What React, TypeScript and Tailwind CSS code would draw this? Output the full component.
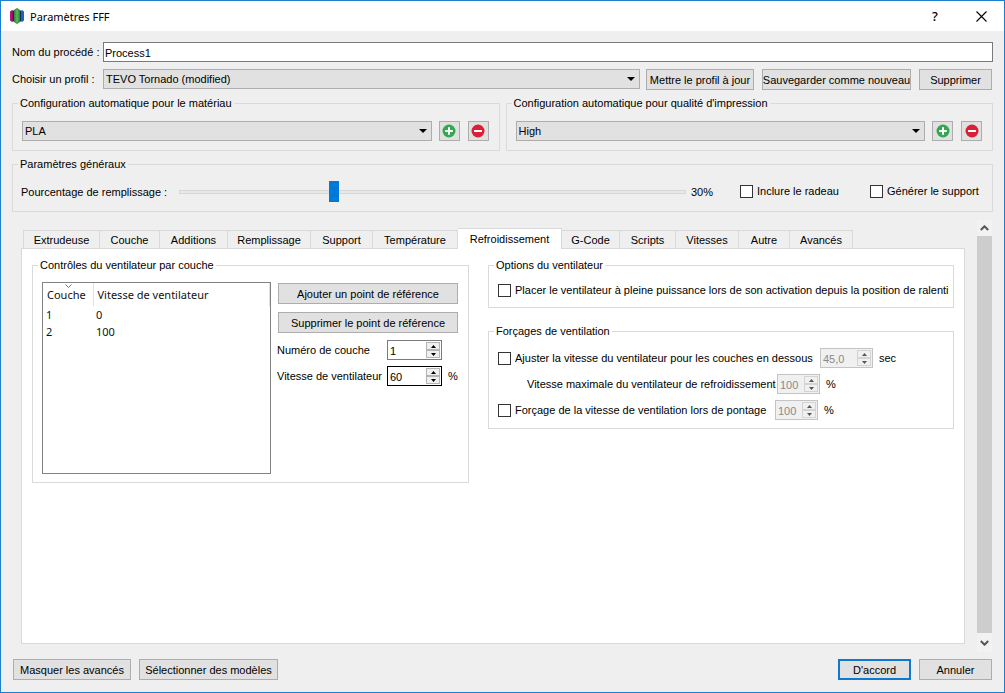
import { useState } from "react";
import type { ReactNode } from "react";

const TABS = [
  { label: "Extrudeuse", width: "w-[77px]" },
  { label: "Couche", width: "w-[60px]" },
  { label: "Additions", width: "w-[68px]" },
  { label: "Remplissage", width: "w-[83px]" },
  { label: "Support", width: "w-[62px]" },
  { label: "Température", width: "w-[85px]" },
  { label: "Refroidissement", width: "w-[104px]" },
  { label: "G-Code", width: "w-[58px]" },
  { label: "Scripts", width: "w-[56px]" },
  { label: "Vitesses", width: "w-[63px]" },
  { label: "Autre", width: "w-[51px]" },
  { label: "Avancés", width: "w-[63px]" },
];

const FAN_POINTS = [
  { layer: 1, speed: 0 },
  { layer: 2, speed: 100 },
];

export default function App() {
  const [activeTab, setActiveTab] = useState("Refroidissement");
  const [infill, setInfill] = useState(30);

  return (
    <div className="flex min-h-screen flex-col border border-[#1a7fce] bg-[#efefef] font-['Liberation_Sans',sans-serif] text-[11px] leading-[15px] text-black">
      <TitleBar />

      <main className="flex flex-1 flex-col px-[11px] pt-[11px] pb-3">
        <div className="flex items-center">
          <label htmlFor="process-name" className="w-[91px] shrink-0 pt-px">
            Nom du procédé :
          </label>
          <input
            id="process-name"
            type="text"
            defaultValue="Process1"
            className="h-5 min-w-0 flex-1 border border-[#7a7a7a] bg-white px-[1px] pt-[1px] outline-none"
          />
        </div>

        <div className="mt-[7px] flex items-start pr-px">
          <label htmlFor="profile" className="w-[91px] shrink-0 pt-[3px]">
            Choisir un profil :
          </label>
          <Select id="profile" value="TEVO Tornado (modified)" />
          <div className="ml-[6px] flex gap-2">
            <Button className="w-[108px]">Mettre le profil à jour</Button>
            <Button className="w-[149px]">Sauvegarder comme nouveau</Button>
            <Button className="w-[73px]">Supprimer</Button>
          </div>
        </div>

        <div className="mt-[6px] flex gap-[6px]">
          <AutoConfig id="material" title="Configuration automatique pour le matériau" value="PLA" />
          <AutoConfig id="quality" title="Configuration automatique pour qualité d'impression" value="High" />
        </div>

        <GroupBox title="Paramètres généraux" className="mt-[6px]">
          <div className="flex items-center pt-[9px] pb-px pl-[8px]">
            <label htmlFor="infill" className="w-[158px] shrink-0 pt-px">
              Pourcentage de remplissage :
            </label>
            <input
              id="infill"
              type="range"
              min={0}
              max={100}
              value={infill}
              onChange={(event) => setInfill(Number(event.target.value))}
              className="h-[21px] min-w-0 flex-1 appearance-none bg-transparent [&::-webkit-slider-runnable-track]:h-1 [&::-webkit-slider-runnable-track]:border [&::-webkit-slider-runnable-track]:border-[#d6d6d6] [&::-webkit-slider-runnable-track]:bg-[#e7eaea] [&::-webkit-slider-thumb]:mt-[-10px] [&::-webkit-slider-thumb]:h-[21px] [&::-webkit-slider-thumb]:w-[10px] [&::-webkit-slider-thumb]:appearance-none [&::-webkit-slider-thumb]:bg-[#007ad9]"
            />
            <output htmlFor="infill" className="w-[54px] pt-px pl-[5px]">
              {infill}%
            </output>
            <CheckBox id="raft" label="Inclure le radeau" className="w-[130px]" />
            <CheckBox id="support" label="Générer le support" className="w-[122px]" />
          </div>
        </GroupBox>

        <div className="mt-2 flex flex-1 gap-3">
          <div className="flex min-w-0 flex-1 flex-col pt-2 pb-2 pl-[9px]">
            <div role="tablist" className="z-10 -mb-px flex h-[21px] items-end pl-[2px]">
              {TABS.map((tab, index) => (
                <button
                  key={tab.label}
                  type="button"
                  role="tab"
                  aria-selected={tab.label === activeTab}
                  onClick={() => setActiveTab(tab.label)}
                  className={`${tab.width} shrink-0 border-t border-r border-[#d9d9d9] ${index === 0 ? "border-l" : ""} ${
                    tab.label === activeTab ? "h-[21px] bg-white" : "mb-px h-[18px] bg-[#efefef] pt-px"
                  }`}
                >
                  {tab.label}
                </button>
              ))}
            </div>
            <div
              role="tabpanel"
              className="flex flex-1 items-start gap-[19px] border border-[#d9d9d9] bg-white px-[10px] pt-[9px]"
            >
              <LayerFanControls />
              <div className="min-w-0 flex-1">
                <FanOptions />
                <FanOverrides />
              </div>
            </div>
          </div>
          <ScrollBar />
        </div>

        <footer className="mt-[7px] flex gap-2 px-[1px]">
          <Button className="w-[118px]">Masquer les avancés</Button>
          <Button className="w-[139px]">Sélectionner des modèles</Button>
          <Button className="ml-auto w-[73px]" primary>
            D'accord
          </Button>
          <Button className="w-[73px]">Annuler</Button>
        </footer>
      </main>
    </div>
  );
}

function TitleBar() {
  return (
    <header className="flex h-[30px] items-center bg-white pl-2">
      <svg width="16" height="16" viewBox="0 0 16 16" aria-hidden="true">
        <path d="M1 3.500l2-1.500 2 1.500v9l-2 1.500-2-1.500z" fill="#b5127f" />
        <path d="M3.500 2.500h2.500v11h-2.500z" fill="#4a1458" />
        <path d="M11 3.500l2-1.500 2 1.500v9l-2 1.500-2-1.500z" fill="#1668b4" />
        <path d="M10 2.500h2v11h-2z" fill="#152a66" />
        <path d="M5 2l3-2 3 2v12l-3 2-3-2z" fill="#2f8a3c" />
        <path d="M6.500 2l1.500-1 1.500 1v12l-1.500 1-1.500-1z" fill="#55b04e" />
      </svg>
      <h1 className="ml-[5px] font-['Noto_Sans',sans-serif]">Paramètres FFF</h1>
      <div className="ml-auto flex h-full">
        <button type="button" aria-label="Aide" className="w-[46px] font-['Noto_Sans',sans-serif] text-[13px] font-medium">
          ?
        </button>
        <button type="button" aria-label="Fermer" className="flex w-[46px] items-center justify-center">
          <svg width="11" height="11" viewBox="0 0 11 11" stroke="#000" strokeWidth="1.100" aria-hidden="true">
            <path d="M.5.5l10 10M10.500.5l-10 10" />
          </svg>
        </button>
      </div>
    </header>
  );
}

type GroupBoxProps = {
  title: string;
  className?: string;
  children: ReactNode;
};

function GroupBox({ title, className = "", children }: GroupBoxProps) {
  return (
    <fieldset className={`min-w-0 border border-[#dadada] pb-2 ${className}`}>
      <legend className="ml-[5px] px-[2px]">{title}</legend>
      {children}
    </fieldset>
  );
}

type ButtonProps = {
  className?: string;
  primary?: boolean;
  children: ReactNode;
};

function Button({ className = "", primary = false, children }: ButtonProps) {
  return (
    <button
      type="button"
      className={`flex h-[21px] shrink-0 items-center justify-center bg-[#e1e1e1] pt-px whitespace-nowrap ${
        primary ? "border-2 border-[#0f78cf]" : "border border-[#adadad]"
      } ${className}`}
    >
      {children}
    </button>
  );
}

function Select({ id, value, label }: { id: string; value: string; label?: string }) {
  return (
    <div className="relative h-5 min-w-0 flex-1">
      <select
        id={id}
        aria-label={label}
        className="block h-5 w-full appearance-none border border-[#adadad] bg-[#e1e1e1] pt-px pl-[2px] outline-none"
      >
        <option>{value}</option>
      </select>
      <svg
        width="8"
        height="4"
        viewBox="0 0 8 4"
        className="pointer-events-none absolute top-2 right-[5px]"
        aria-hidden="true"
      >
        <path d="M0 0h8l-4 4z" />
      </svg>
    </div>
  );
}

function AutoConfig({ id, title, value }: { id: string; title: string; value: string }) {
  return (
    <GroupBox title={title} className="flex-1">
      <div className="flex items-center pt-[10px] pr-[10px] pb-px pl-[9px]">
        <Select id={id} value={value} label={title} />
        <button
          type="button"
          aria-label="Ajouter"
          className="ml-[7px] flex h-5 w-[21px] items-center justify-center border border-[#adadad] bg-[#e1e1e1]"
        >
          <svg width="14" height="14" viewBox="0 0 14 14" aria-hidden="true">
            <circle cx="7" cy="7" r="6.500" fill="#35a753" />
            <path d="M7 3.200v7.600M3.200 7h7.600" stroke="#fff" strokeWidth="2" />
          </svg>
        </button>
        <button
          type="button"
          aria-label="Retirer"
          className="ml-2 flex h-5 w-[21px] items-center justify-center border border-[#adadad] bg-[#e1e1e1]"
        >
          <svg width="14" height="14" viewBox="0 0 14 14" aria-hidden="true">
            <circle cx="7" cy="7" r="6.500" fill="#db1f35" />
            <path d="M3 7h8" stroke="#fff" strokeWidth="2" />
          </svg>
        </button>
      </div>
    </GroupBox>
  );
}

function CheckBox({ id, label, className = "" }: { id: string; label: string; className?: string }) {
  return (
    <div className={`flex shrink-0 items-center gap-1 ${className}`}>
      <input
        id={id}
        type="checkbox"
        className="h-[13px] w-[13px] shrink-0 appearance-none border border-[#333] bg-white checked:bg-[#0078d7]"
      />
      <label htmlFor={id} className="whitespace-nowrap">
        {label}
      </label>
    </div>
  );
}

type SpinBoxProps = {
  id: string;
  value: string;
  label?: string;
  focused?: boolean;
  disabled?: boolean;
  className?: string;
};

function SpinBox({ id, value, label, focused = false, disabled = false, className = "w-[55px]" }: SpinBoxProps) {
  const frame = disabled
    ? "border-[#c4c4c4] bg-[#f0f0f0] text-[#8a8a8a]"
    : focused
      ? "border-black bg-white"
      : "border-[#7a7a7a] bg-white";
  const arrow = `flex h-2 w-[14px] items-center justify-center border bg-[#f0f0f0] ${
    disabled ? "border-[#d4d4d4]" : "border-[#b4b4b4]"
  }`;

  return (
    <div className={`flex h-5 shrink-0 items-center border pr-[1px] ${frame} ${className}`}>
      <input
        id={id}
        type="text"
        inputMode="decimal"
        aria-label={label}
        defaultValue={value}
        disabled={disabled}
        className="h-full w-0 min-w-0 flex-1 bg-transparent pt-[2px] pl-[2px] outline-none"
      />
      <div className={disabled ? "text-[#555]" : "text-black"}>
        <button type="button" tabIndex={-1} disabled={disabled} aria-label="Augmenter" className={arrow}>
          <svg width="5" height="3" viewBox="0 0 5 3" fill="currentColor" aria-hidden="true">
            <path d="M0 3h5l-2.500-3z" />
          </svg>
        </button>
        <button type="button" tabIndex={-1} disabled={disabled} aria-label="Diminuer" className={arrow}>
          <svg width="5" height="3" viewBox="0 0 5 3" fill="currentColor" aria-hidden="true">
            <path d="M0 0h5l-2.500 3z" />
          </svg>
        </button>
      </div>
    </div>
  );
}

function LayerFanControls() {
  return (
    <GroupBox title="Contrôles du ventilateur par couche" className="w-[437px] shrink-0">
      <div className="flex h-[201px] gap-[6px] pt-[9px] pr-[10px] pl-[9px]">
        <div className="min-w-0 flex-1 border border-[#828282] bg-white font-['Noto_Sans',sans-serif] text-[#111]">
          <table className="w-full table-fixed text-left">
            <thead>
              <tr className="h-[23px]">
                <th className="relative w-[50px] border-r border-[#e0e0e0] p-0 pl-1 font-normal">
                  <svg
                    width="7"
                    height="4"
                    viewBox="0 0 7 4"
                    fill="none"
                    stroke="#777"
                    className="absolute top-[1px] left-[22px]"
                    aria-hidden="true"
                  >
                    <path d="M.5.5l3 3 3-3" />
                  </svg>
                  Couche
                </th>
                <th className="border-r border-[#e0e0e0] p-0 pl-1 font-normal">Vitesse de ventilateur</th>
              </tr>
            </thead>
            <tbody>
              {FAN_POINTS.map((point) => (
                <tr key={point.layer} className="h-[17px]">
                  <td className="p-0 pl-[3px]">{point.layer}</td>
                  <td className="p-0 pl-[3px]">{point.speed}</td>
                </tr>
              ))}
            </tbody>
          </table>
        </div>

        <div className="w-[181px] shrink-0 pt-px">
          <div className="flex flex-col gap-2 pl-px">
            <Button>Ajouter un point de référence</Button>
            <Button>Supprimer le point de référence</Button>
          </div>
          <div className="mt-[7px] flex items-center">
            <label htmlFor="layer-number" className="w-[110px] pt-px">
              Numéro de couche
            </label>
            <SpinBox id="layer-number" value="1" />
          </div>
          <div className="mt-[6px] flex items-center">
            <label htmlFor="fan-speed" className="w-[110px] pt-px">
              Vitesse de ventilateur
            </label>
            <SpinBox id="fan-speed" value="60" focused />
            <span className="ml-[6px] pt-px">%</span>
          </div>
        </div>
      </div>
    </GroupBox>
  );
}

function FanOptions() {
  return (
    <GroupBox title="Options du ventilateur">
      <div className="flex h-[26px] items-center pt-[9px] pl-[9px]">
        <CheckBox
          id="full-power"
          label="Placer le ventilateur à pleine puissance lors de son activation depuis la position de ralenti"
        />
      </div>
    </GroupBox>
  );
}

function FanOverrides() {
  return (
    <GroupBox title="Forçages de ventilation" className="mt-4">
      <div className="flex flex-col gap-[6px] pt-[9px] pl-[9px]">
        <div className="flex items-center">
          <CheckBox
            id="adjust-below"
            label="Ajuster la vitesse du ventilateur pour les couches en dessous"
            className="w-[322px]"
          />
          <SpinBox id="below-seconds" label="Durée de couche" value="45,0" disabled className="w-[53px]" />
          <span className="ml-[6px] pt-px">sec</span>
        </div>
        <div className="flex items-center pl-[29px]">
          <label htmlFor="max-speed" className="w-[250px] whitespace-nowrap">
            Vitesse maximale du ventilateur de refroidissement
          </label>
          <SpinBox id="max-speed" value="100" disabled className="w-[43px]" />
          <span className="ml-[6px] pt-px">%</span>
        </div>
        <div className="flex items-center">
          <CheckBox
            id="bridging"
            label="Forçage de la vitesse de ventilation lors de pontage"
            className="w-[277px]"
          />
          <SpinBox id="bridging-speed" label="Vitesse lors de pontage" value="100" disabled className="w-[43px]" />
          <span className="ml-[6px] pt-px">%</span>
        </div>
      </div>
    </GroupBox>
  );
}

function ScrollBar() {
  return (
    <div className="mr-px flex w-[15px] shrink-0 flex-col bg-[#f2f2f2]">
      <button type="button" aria-label="Défiler vers le haut" className="flex h-4 items-center justify-center">
        <svg width="9" height="6" viewBox="0 0 9 6" fill="none" stroke="#555" strokeWidth="2" aria-hidden="true">
          <path d="M.8 5l3.700-3.700 3.700 3.700" />
        </svg>
      </button>
      <div className="flex-1 bg-[#cdcdcd]" />
      <button type="button" aria-label="Défiler vers le bas" className="flex h-[19px] items-center justify-center">
        <svg width="9" height="6" viewBox="0 0 9 6" fill="none" stroke="#555" strokeWidth="2" aria-hidden="true">
          <path d="M.8 1l3.700 3.700 3.700-3.700" />
        </svg>
      </button>
    </div>
  );
}
